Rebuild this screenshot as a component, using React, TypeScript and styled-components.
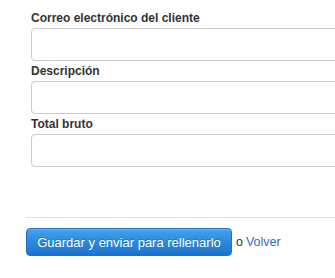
import React from "react";
import styled, { createGlobalStyle } from "styled-components";

const Global = createGlobalStyle`
  html, body { margin: 0; padding: 0; background: #fff; overflow: hidden; }
  body { font-family: "Liberation Sans", Arial, Helvetica, sans-serif; color: #333; }
`;

const Page = styled.div`
  width: 335px;
  height: 278px;
  overflow: hidden;
  padding: 12px 0 0 26px;
  box-sizing: border-box;
`;

const Fields = styled.div`
  padding-left: 5px;
  display: flex;
  flex-direction: column;
`;

const Field = styled.div`
  display: flex;
  flex-direction: column;
  gap: 3px;
  margin-bottom: 4px;
`;

const Label = styled.label`
  font-size: 12px;
  font-weight: bold;
  line-height: 13px;
  color: #333;
`;

const Input = styled.div`
  width: 340px;
  height: 33px;
  box-sizing: border-box;
  border: 1px solid #ccc;
  border-radius: 4px;
  background: #fff;
`;

const Rule = styled.hr`
  margin: 46px 0 0 0;
  border: 0;
  border-top: 1px solid #e0e0e0;
  width: 320px;
`;

const Actions = styled.div`
  display: flex;
  align-items: center;
  margin-top: 10px;
  font-size: 12.5px;
`;

const Button = styled.button`
  font-family: "Liberation Sans", Arial, Helvetica, sans-serif;
  font-size: 13px;
  color: #fff;
  height: 28px;
  width: 206px;
  padding: 0;
  border: 1px solid #1f6fc4;
  border-radius: 4px;
  background: linear-gradient(to bottom, #45a2ec 0%, #2a86dc 55%, #1d74d0 100%);
  text-shadow: 0 -1px 0 rgba(0,0,0,0.2);
  box-shadow: inset 0 1px 0 rgba(255,255,255,0.2);
`;

const Or = styled.span`
  margin-left: 4px;
  color: #333;
`;

const Link = styled.a`
  margin-left: 3px;
  color: #2f73b4;
  text-decoration: none;
`;

export default function App() {
  return (
    <>
      <Global />
      <Page>
        <Fields>
          <Field>
            <Label>Correo electrónico del cliente</Label>
            <Input />
          </Field>
          <Field>
            <Label>Descripción</Label>
            <Input />
          </Field>
          <Field>
            <Label>Total bruto</Label>
            <Input />
          </Field>
        </Fields>
        <Rule />
        <Actions>
          <Button>Guardar y enviar para rellenarlo</Button>
          <Or>o</Or>
          <Link href="#">Volver</Link>
        </Actions>
      </Page>
    </>
  );
}
